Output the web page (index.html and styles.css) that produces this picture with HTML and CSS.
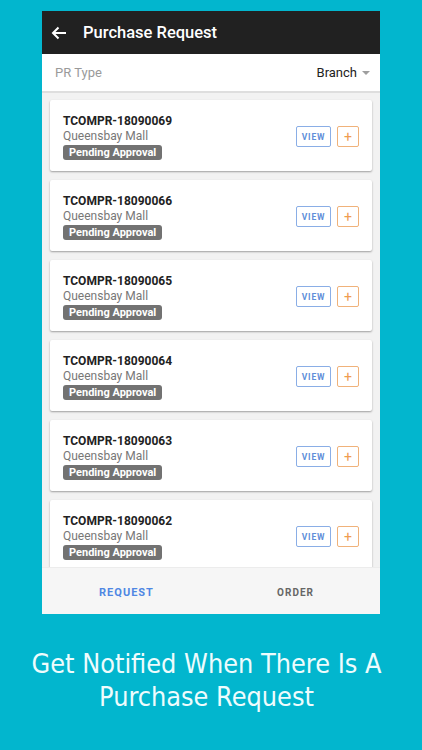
FILE: index.html
```html
<!DOCTYPE html>
<html>
<head>
<meta charset="utf-8">
<link rel="stylesheet" href="styles.css">
</head>
<body>
<div class="screen">
  <div class="appbar">
    <svg class="back" width="16" height="14" viewBox="0 0 16 14"><path d="M15 7H2M7.5 1.5L2 7l5.5 5.5" fill="none" stroke="#fff" stroke-width="2"/></svg>
    <span class="title">Purchase Request</span>
  </div>
  <div class="filter">
    <span class="label">PR Type</span>
    <span class="select">Branch <span class="caret"></span></span>
  </div>
  <div class="list">
    <div class="card"><div class="info"><div class="code">TCOMPR-18090069</div><div class="loc">Queensbay Mall</div><span class="badge">Pending Approval</span></div><div class="actions"><span class="btn-view">VIEW</span><span class="btn-add">+</span></div></div>
    <div class="card"><div class="info"><div class="code">TCOMPR-18090066</div><div class="loc">Queensbay Mall</div><span class="badge">Pending Approval</span></div><div class="actions"><span class="btn-view">VIEW</span><span class="btn-add">+</span></div></div>
    <div class="card"><div class="info"><div class="code">TCOMPR-18090065</div><div class="loc">Queensbay Mall</div><span class="badge">Pending Approval</span></div><div class="actions"><span class="btn-view">VIEW</span><span class="btn-add">+</span></div></div>
    <div class="card"><div class="info"><div class="code">TCOMPR-18090064</div><div class="loc">Queensbay Mall</div><span class="badge">Pending Approval</span></div><div class="actions"><span class="btn-view">VIEW</span><span class="btn-add">+</span></div></div>
    <div class="card"><div class="info"><div class="code">TCOMPR-18090063</div><div class="loc">Queensbay Mall</div><span class="badge">Pending Approval</span></div><div class="actions"><span class="btn-view">VIEW</span><span class="btn-add">+</span></div></div>
    <div class="card"><div class="info"><div class="code">TCOMPR-18090062</div><div class="loc">Queensbay Mall</div><span class="badge">Pending Approval</span></div><div class="actions"><span class="btn-view">VIEW</span><span class="btn-add">+</span></div></div>
  </div>
  <div class="tabs">
    <span class="tab active">REQUEST</span>
    <span class="tab">ORDER</span>
  </div>
</div>
<div class="caption">Get Notified When There Is A<br>Purchase Request</div>
</body>
</html>
```
FILE: styles.css
```css
html, body {
  margin: 0;
  padding: 0;
  background: #02b6ce;
}
body {
  width: 422px;
  height: 750px;
  overflow: hidden;
  font-family: Roboto, "Liberation Sans", sans-serif;
}
.screen {
  margin: 11px 0 0 42px;
  width: 338px;
  height: 603px;
  display: flex;
  flex-direction: column;
  background: #f2f2f2;
  overflow: hidden;
}
.appbar {
  height: 43px;
  flex: none;
  background: #212121;
  display: flex;
  align-items: center;
  padding-left: 9px;
}
.back { margin-right: 16px; }
.title {
  color: #fff;
  font-size: 16.5px;
  font-weight: 500;
}
.filter {
  height: 37px;
  flex: none;
  background: #fff;
  display: flex;
  align-items: center;
  justify-content: space-between;
  padding: 0 10px 0 13px;
  border-bottom: 2px solid #dedede;
}
.label { color: #9a9a9a; font-size: 13px; }
.select { color: #222; font-size: 13px; display: flex; align-items: center; }
.caret {
  margin-left: 5px;
  width: 0; height: 0;
  border-left: 4px solid transparent;
  border-right: 4px solid transparent;
  border-top: 4px solid #9e9e9e;
}
.list {
  flex: 1;
  overflow: hidden;
  padding: 7px 8px 0;
  display: flex;
  flex-direction: column;
  gap: 9px;
}
.card {
  flex: none;
  height: 71px;
  background: #fff;
  border-radius: 2px;
  box-shadow: 0 1px 2px rgba(0,0,0,0.35);
  display: flex;
  align-items: center;
  justify-content: space-between;
  padding: 2px 13px 0 13px;
  box-sizing: border-box;
}
.info { display: flex; flex-direction: column; align-items: flex-start; }
.code { font-size: 12px; font-weight: 700; color: #222; line-height: 15px; }
.loc { font-size: 12px; color: #777; line-height: 15px; }
.badge {
  margin-top: 1px;
  background: #727272;
  color: #fff;
  font-size: 11px;
  font-weight: 700;
  line-height: 15px;
  padding: 0 6px;
  border-radius: 3px;
}
.actions { display: flex; gap: 6px; align-items: center; }
.btn-view, .btn-add {
  height: 21px;
  display: flex;
  align-items: center;
  justify-content: center;
  border-radius: 2px;
  box-sizing: border-box;
}
.btn-view {
  width: 35px;
  border: 1px solid #8aaee6;
  color: #5f8fd9;
  font-size: 8.5px;
  font-weight: 700;
  letter-spacing: 0.8px;
}
.btn-add {
  width: 22px;
  border: 1px solid #f0b27a;
  color: #ef9d50;
  font-size: 14px;
}
.tabs {
  height: 47px;
  flex: none;
  background: #f6f6f6;
  border-top: 1px solid #ececec;
  display: flex;
  box-sizing: border-box;
  padding-top: 3px;
}
.tab {
  flex: 1;
  display: flex;
  align-items: center;
  justify-content: center;
  font-size: 10px;
  font-weight: 700;
  letter-spacing: 1px;
  color: #666;
}
.tab.active { color: #4f87e3; font-size: 11px; }
.caption {
  margin-top: 33px;
  padding-right: 9px;
  text-align: center;
  color: #eefcfd;
  font-family: "DejaVu Sans Condensed", "DejaVu Sans", sans-serif;
  font-size: 26.8px;
  line-height: 33px;
}
```
